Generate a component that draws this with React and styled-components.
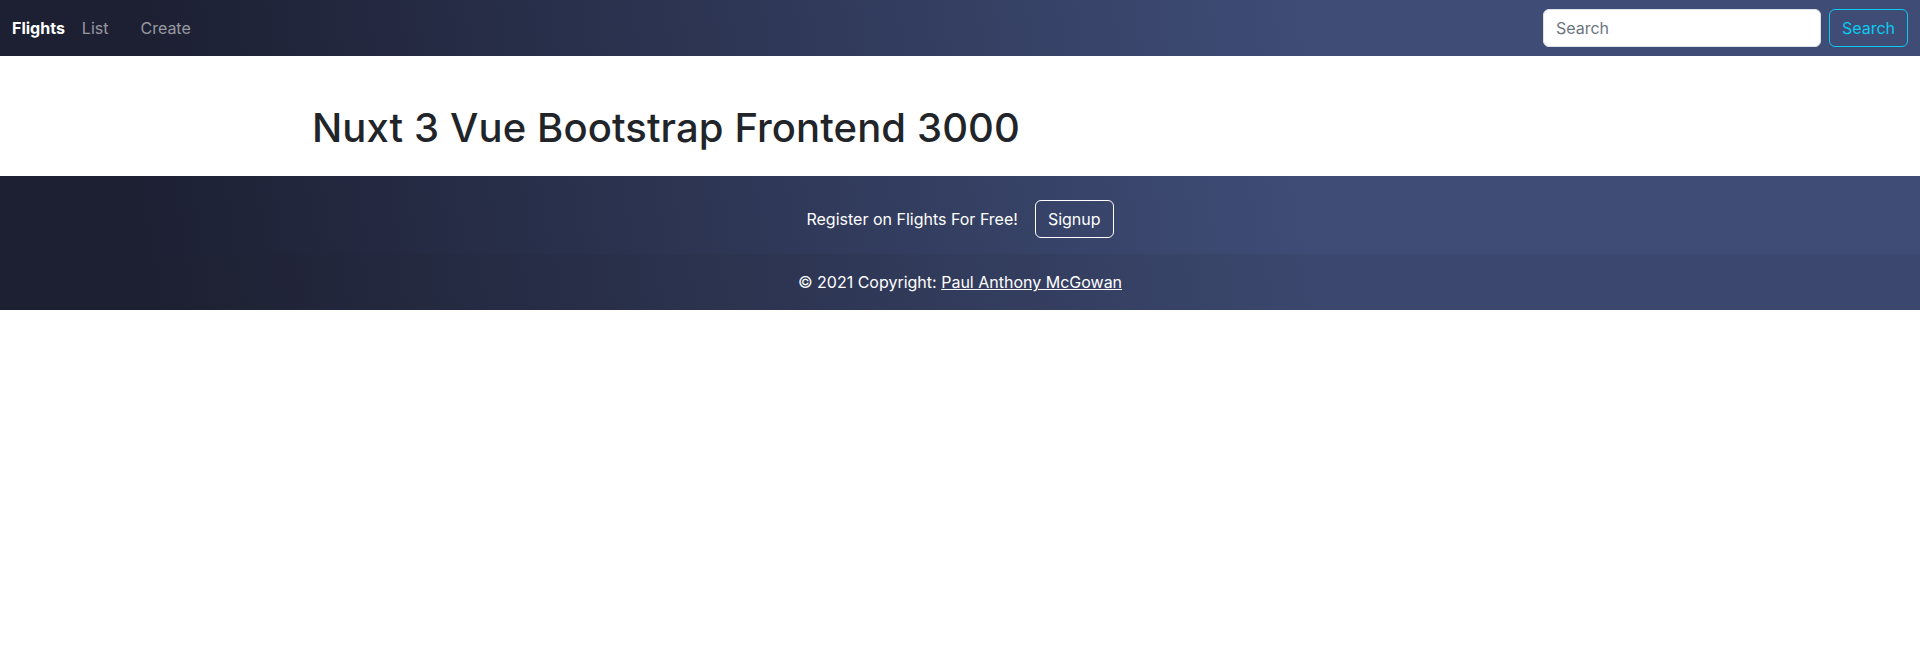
import React from "react";
import styled, { createGlobalStyle } from "styled-components";

const GlobalStyle = createGlobalStyle`
  * {
    box-sizing: border-box;
  }
  body {
    margin: 0;
    font-family: Inter, "Noto Sans", "Liberation Sans", sans-serif;
    font-size: 16px;
    line-height: 1.5;
    color: #212529;
    background: #fff;
  }
`;

const bar = `
  background-image: linear-gradient(
    80deg,
    #1d2033 8%,
    #3e4c76 68%,
    #3e4c76 100%
  );
`;

const StyledNavbar = styled.nav`
  ${bar}
  height: 56px;
  display: flex;
  align-items: center;
  justify-content: space-between;
  padding: 0 12px;
`;

const StyledNavLeft = styled.div`
  display: flex;
  align-items: center;
`;

const StyledBrand = styled.a`
  color: #fff;
  font-weight: 700;
  text-decoration: none;
  margin-right: 17px;
`;

const StyledNavLink = styled.a`
  color: rgba(255, 255, 255, 0.55);
  text-decoration: none;
  margin-right: ${(p) => p.$gap || 0}px;
`;

const StyledSearchForm = styled.form`
  display: flex;
  align-items: center;
  gap: 8px;
`;

const StyledInput = styled.input`
  width: 278px;
  height: 38px;
  padding: 6px 12px;
  font-family: inherit;
  font-size: 16px;
  color: #212529;
  background: #fff;
  border: 1px solid #dee2e6;
  border-radius: 6px;
  outline: none;
  &::placeholder {
    color: #6c757d;
  }
`;

const StyledOutlineButton = styled.button`
  height: 38px;
  padding: 0 12px;
  font-family: inherit;
  font-size: 16px;
  background: transparent;
  color: ${(p) => p.$color};
  border: 1px solid ${(p) => p.$color};
  border-radius: 6px;
  cursor: pointer;
`;

const StyledMain = styled.main`
  width: 1320px;
  margin: 0 auto;
  padding: 48px 12px 24px;
`;

const StyledTitle = styled.h1`
  margin: 0;
  font-size: 40px;
  font-weight: 500;
  line-height: 1.2;
  letter-spacing: 0.1px;
`;

const StyledFooter = styled.footer`
  ${bar}
  color: #fff;
  text-align: center;
`;

const StyledSignupRow = styled.section`
  display: flex;
  align-items: center;
  justify-content: center;
  gap: 17px;
  padding: 24px 0 16px;
`;

const StyledCopyright = styled.div`
  padding: 16px;
  background: rgba(33, 37, 41, 0.11);
  a {
    color: #fff;
  }
`;

const App = () => {
  return (
    <>
      <GlobalStyle />
      <StyledNavbar>
        <StyledNavLeft>
          <StyledBrand href="#">Flights</StyledBrand>
          <StyledNavLink href="#" $gap={32}>
            List
          </StyledNavLink>
          <StyledNavLink href="#">Create</StyledNavLink>
        </StyledNavLeft>
        <StyledSearchForm onSubmit={(e) => e.preventDefault()}>
          <StyledInput type="search" placeholder="Search" />
          <StyledOutlineButton type="submit" $color="#0dcaf0">
            Search
          </StyledOutlineButton>
        </StyledSearchForm>
      </StyledNavbar>
      <StyledMain>
        <StyledTitle>Nuxt 3 Vue Bootstrap Frontend 3000</StyledTitle>
      </StyledMain>
      <StyledFooter>
        <StyledSignupRow>
          <span>Register on Flights For Free!</span>
          <StyledOutlineButton type="button" $color="#fff">
            Signup
          </StyledOutlineButton>
        </StyledSignupRow>
        <StyledCopyright>
          © 2021 Copyright: <a href="#">Paul Anthony McGowan</a>
        </StyledCopyright>
      </StyledFooter>
    </>
  );
};

export default App;
